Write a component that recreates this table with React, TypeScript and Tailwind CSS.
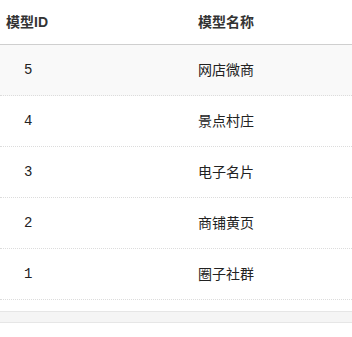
const rows = [
  { id: 5, name: '网店微商' },
  { id: 4, name: '景点村庄' },
  { id: 3, name: '电子名片' },
  { id: 2, name: '商铺黄页' },
  { id: 1, name: '圈子社群' },
];

export default function App() {
  return (
    <div className="w-[352px] h-[337px] bg-white text-[#333] overflow-hidden" style={{ fontFamily: '"Liberation Sans", "Noto Sans CJK SC", sans-serif' }}>
      <div className="flex h-[45px] items-center border-b border-[#cfcfcf] text-[14px] font-bold">
        <div className="w-[192px] pl-[6px]">模型ID</div>
        <div className="flex-1 pl-[6px]">模型名称</div>
      </div>
      {rows.map((row, i) => (
        <div
          key={row.id}
          className={`flex h-[51px] items-center border-b border-dotted border-[#dcdcdc] text-[14px] text-[#222] ${i === 0 ? 'bg-[#f9f9f9]' : 'bg-white'}`}
        >
          <div className="w-[192px] pl-[24px] font-['Liberation_Mono',monospace] text-[14px]">{row.id}</div>
          <div className="flex-1 pl-[6px]">{row.name}</div>
        </div>
      ))}
      <div className="mt-[11px] h-[12px] border-y border-[#e6e6e6] bg-[#f5f5f5]"></div>
    </div>
  );
}
